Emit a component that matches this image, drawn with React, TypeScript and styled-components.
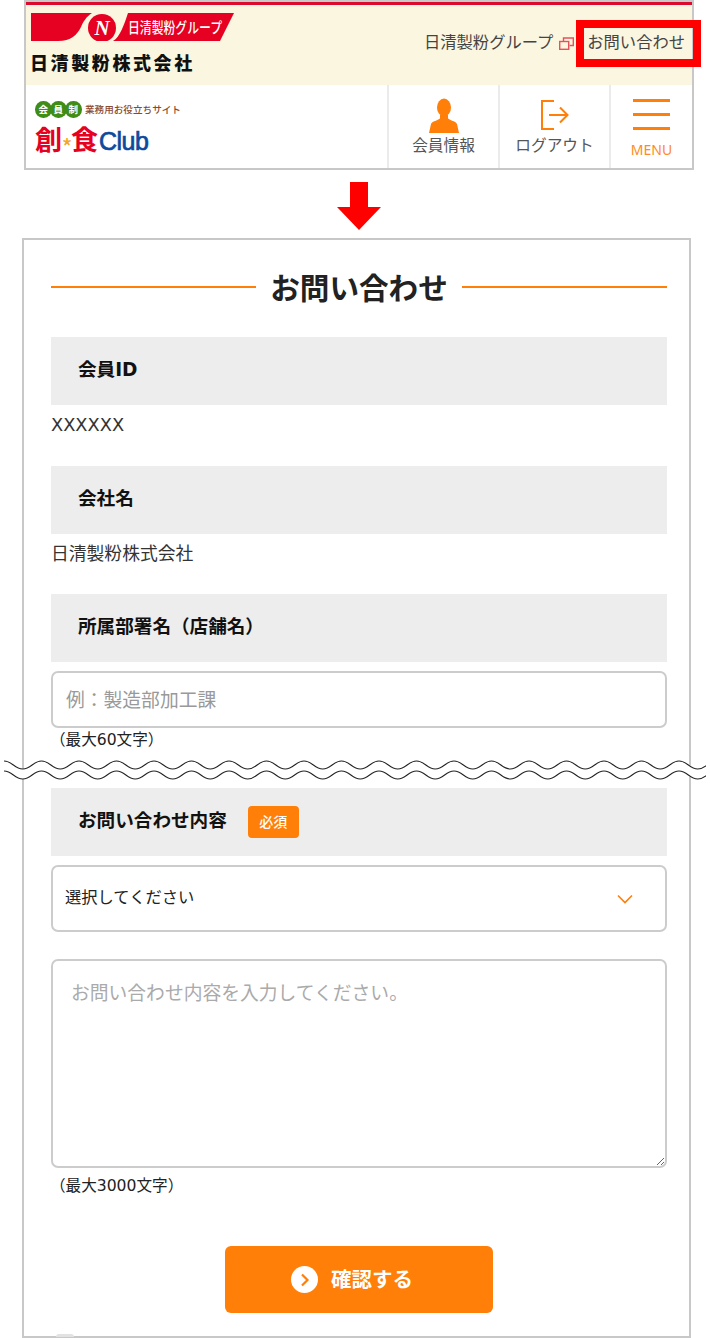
import React from "react";
import styled, { createGlobalStyle } from "styled-components";

const FONT = `"Noto Sans CJK JP", "Noto Sans", sans-serif`;
const BODY_FONT = `"DejaVu Sans", "Noto Sans CJK JP", sans-serif`;

const GlobalStyle = createGlobalStyle`
  html, body {
    margin: 0;
    padding: 0;
    background: #fff;
    font-family: ${FONT};
    color: #222;
  }
  *, *::before, *::after {
    box-sizing: border-box;
  }
`;

// sine-like line for the "page cut" mark
const wavePath = (y: number) => {
  const half = 18.75;
  let d = `M4 ${y}`;
  let x = 4;
  let down = true;
  while (x < 700) {
    const from = down ? y : y + 8;
    const to = down ? y + 8 : y;
    d += ` C${x + half * 0.45} ${from} ${x + half * 0.55} ${to} ${x + half} ${to}`;
    x += half;
    down = !down;
  }
  return d;
};

const App = () => {
  return (
    <Page>
      <GlobalStyle />
      <Header>
        <TopBar>
          <Brand>
            <svg width="204" height="28" viewBox="0 0 204 28" aria-hidden="true">
              <path d="M0 0H61C55 4 52 9 50 14C46 22 40 28 27 28H0Z" fill="#e60021" />
              <path d="M97 0H203L189 28H82C89 24 93 12 97 0Z" fill="#e60021" />
              <circle cx="71" cy="15" r="14" fill="#e60021" />
              <text x="71" y="22" textAnchor="middle" fontSize="21" fontWeight="700" fontStyle="italic" fill="#fff" fontFamily="Liberation Serif">N</text>
              <text x="97" y="20" fontSize="15" fontWeight="500" fill="#fff" fontFamily={FONT} textLength="94" lengthAdjust="spacingAndGlyphs">日清製粉グループ</text>
            </svg>
            <CompanyName>日清製粉株式会社</CompanyName>
          </Brand>
          <TopLinks>
            <TopLink>日清製粉グループ</TopLink>
            <svg width="15" height="13" viewBox="0 0 15 13" aria-hidden="true">
              <rect x="0.7" y="4.5" width="9" height="7.8" fill="none" stroke="#e8505b" strokeWidth="1.4" />
              <path d="M4.5 4V1H14.3V8.5H10.5" fill="none" stroke="#e8505b" strokeWidth="1.4" />
            </svg>
            <ContactLink>お問い合わせ</ContactLink>
          </TopLinks>
        </TopBar>
        <NavBar>
          <ClubLogo>
            <Tagline>
              <MemberBadge>
                <BadgeChar>会</BadgeChar>
                <BadgeChar>員</BadgeChar>
                <BadgeChar>制</BadgeChar>
              </MemberBadge>
              <TaglineText>業務用お役立ちサイト</TaglineText>
            </Tagline>
            <ClubName>
              <ClubKanji>創</ClubKanji>
              <ClubStar>*</ClubStar>
              <ClubKanji>食</ClubKanji>
              <ClubLatin>Club</ClubLatin>
            </ClubName>
          </ClubLogo>
          <NavItem>
            <IconSlot>
              <svg width="30" height="35" viewBox="0 0 30 35" aria-hidden="true">
                <ellipse cx="15" cy="9.5" rx="7" ry="9" fill="#ff7f09" />
                <path d="M11 17h8v3c0 2 8 3 9 6l2 9H0l2-9c1-3 9-4 9-6Z" fill="#ff7f09" />
              </svg>
            </IconSlot>
            <NavLabel>会員情報</NavLabel>
          </NavItem>
          <NavItem>
            <IconSlot>
              <svg width="28" height="30" viewBox="0 0 28 30" aria-hidden="true">
                <path d="M13 1H1V29H13" fill="none" stroke="#ff7f09" strokeWidth="2" />
                <path d="M8 15H26.5M19 7.5L26.5 15L19 22.5" fill="none" stroke="#ff7f09" strokeWidth="2" />
              </svg>
            </IconSlot>
            <NavLabel>ログアウト</NavLabel>
          </NavItem>
          <NavItem>
            <Burger>
              <BurgerLine />
              <BurgerLine />
              <BurgerLine />
            </Burger>
            <MenuLabel>MENU</MenuLabel>
          </NavItem>
        </NavBar>
      </Header>

      <ArrowRow>
        <svg width="44" height="48" viewBox="0 0 44 48" aria-hidden="true">
          <path d="M13 0H31V25H44L22 48L0 25H13Z" fill="#f00" />
        </svg>
      </ArrowRow>

      <Card>
        <TitleRow>
          <TitleRule />
          <Title>お問い合わせ</Title>
          <TitleRule />
        </TitleRow>

        <FieldHead>会員ID</FieldHead>
        <Value>XXXXXX</Value>

        <FieldHead>会社名</FieldHead>
        <Value>日清製粉株式会社</Value>

        <FieldHead>所属部署名（店舗名）</FieldHead>
        <TextInput placeholder="例：製造部加工課" readOnly />
        <Note>（最大60文字）</Note>

        <BreakSpace>
          <WaveBreak width="706" height="26" viewBox="0 0 706 26" aria-hidden="true">
            <path d={wavePath(8)} fill="none" stroke="#fff" strokeWidth="10" />
            <path d={wavePath(3)} fill="none" stroke="#222" strokeWidth="1.1" />
            <path d={wavePath(13)} fill="none" stroke="#222" strokeWidth="1.1" />
          </WaveBreak>
        </BreakSpace>

        <FieldHead>
          お問い合わせ内容
          <Required>必須</Required>
        </FieldHead>
        <SelectBox>
          <span>選択してください</span>
          <svg width="16" height="10" viewBox="0 0 16 10" aria-hidden="true">
            <path d="M1 1.5L8 8.5L15 1.5" fill="none" stroke="#ff7f09" strokeWidth="1.6" />
          </svg>
        </SelectBox>
        <TextArea placeholder="お問い合わせ内容を入力してください。" readOnly />
        <Note>（最大3000文字）</Note>

        <SubmitRow>
          <SubmitButton type="button">
            <SubmitIcon>
              <svg width="10" height="14" viewBox="0 0 10 14" aria-hidden="true">
                <path d="M2 1.5L7.5 7L2 12.5" fill="none" stroke="#ff7f09" strokeWidth="2.2" />
              </svg>
            </SubmitIcon>
            <SubmitText>確認する</SubmitText>
          </SubmitButton>
        </SubmitRow>
        <CutOffDot />
      </Card>
    </Page>
  );
};

const Page = styled.div`
  width: 710px;
  height: 1338px;
  overflow: hidden;
  padding-left: 22px;
`;

const Header = styled.header`
  width: 670px;
  height: 170px;
  margin-left: 2px;
  border: 2px solid #c8c8c8;
  border-top: none;
  display: flex;
  flex-direction: column;
`;

const TopBar = styled.div`
  height: 85px;
  flex: none;
  background: #faf6df;
  border-top: 2px solid #c8c8c8;
  box-shadow: inset 0 3px 0 #dc0a2c;
  padding: 11px 0 0 5px;
  display: flex;
  justify-content: space-between;
`;

const Brand = styled.div`
  display: flex;
  flex-direction: column;
  gap: 10px;
`;

const CompanyName = styled.div`
  font-size: 18px;
  line-height: 22px;
  font-weight: 900;
  color: #111;
  letter-spacing: 2.6px;
  margin-left: -1px;
`;

const TopLinks = styled.div`
  position: relative;
  display: flex;
  align-items: center;
  height: 52px;
  padding: 0 7px 0 0;
  margin-top: 2px;
  color: #444;
  font-size: 16.3px;
  & > svg {
    margin: 4px 0 0 6px;
  }
`;

const TopLink = styled.span`
  letter-spacing: 0;
`;

const ContactLink = styled.span`
  margin-left: 13px;
  color: #444;
  &::after {
    content: "";
    position: absolute;
    right: -9px;
    top: 5px;
    width: 125px;
    height: 47px;
    border: 8px solid #f00;
  }
`;

const NavBar = styled.nav`
  flex: 1;
  display: flex;
`;

const ClubLogo = styled.div`
  width: 361px;
  padding: 16px 0 0 9px;
`;

const Tagline = styled.div`
  display: flex;
  align-items: center;
  gap: 4px;
`;

const MemberBadge = styled.span`
  display: flex;
`;

const BadgeChar = styled.span`
  width: 16.5px;
  height: 16.5px;
  margin-right: -1.5px;
  border-radius: 50%;
  background: #3f8c16;
  color: #fff;
  font-size: 9.5px;
  line-height: 16px;
  text-align: center;
  font-weight: 700;
`;

const TaglineText = styled.span`
  margin-left: 1px;
  font-size: 9.6px;
  line-height: 16px;
  font-weight: 500;
  color: #8a4a30;
`;

const ClubName = styled.div`
  display: flex;
  align-items: baseline;
  height: 30px;
  margin-top: 6px;
  line-height: 30px;
`;

const ClubKanji = styled.span`
  font-size: 27px;
  font-weight: 700;
  color: #e60021;
`;

const ClubStar = styled.span`
  width: 9px;
  font-size: 21px;
  line-height: 20px;
  font-weight: 500;
  color: #f5a623;
  text-align: center;
  transform: translateY(5px);
`;

const ClubLatin = styled.span`
  margin-left: 1px;
  font-family: "Liberation Sans", sans-serif;
  font-size: 25px;
  letter-spacing: -0.5px;
  color: #0d4a9e;
  -webkit-text-stroke: 0.7px #0d4a9e;
`;

const NavItem = styled.div`
  width: 111px;
  flex: none;
  border-left: 2px solid #ebebeb;
  display: flex;
  flex-direction: column;
  align-items: center;
  padding-top: 12px;
  &:last-child {
    width: 83px;
  }
`;

const IconSlot = styled.div`
  height: 36px;
  display: flex;
  align-items: center;
  justify-content: center;
`;

const NavLabel = styled.span`
  font-size: 15.7px;
  line-height: 24px;
  color: #555;
`;

const Burger = styled.div`
  margin-top: 2px;
  display: flex;
  flex-direction: column;
  gap: 11px;
`;

const BurgerLine = styled.div`
  width: 37px;
  height: 3px;
  background: #ff7f09;
`;

const MenuLabel = styled.span`
  margin-top: 11px;
  font-family: "Noto Sans", sans-serif;
  font-size: 14px;
  line-height: 18px;
  color: #ff8a25;
`;

const ArrowRow = styled.div`
  height: 68px;
  padding: 12px 0 0 315px;
  & > svg {
    display: block;
  }
`;

const Card = styled.main`
  position: relative;
  width: 669px;
  height: 1100px;
  border: 2px solid #c8c8c8;
  padding: 27px 22px 0 27px;
`;

const TitleRow = styled.div`
  height: 40px;
  margin-bottom: 30px;
  display: flex;
  align-items: center;
  gap: 14px;
`;

const TitleRule = styled.div`
  flex: 1;
  height: 2px;
  background: #ff7f09;
`;

const Title = styled.h1`
  margin: 0;
  font-size: 29.6px;
  line-height: 40px;
  font-weight: 700;
  color: #222;
`;

const FieldHead = styled.h2`
  margin: 0;
  height: 68px;
  padding: 0 0 7px 27px;
  display: flex;
  align-items: center;
  background: #ededed;
  font-family: ${BODY_FONT};
  font-size: 18.6px;
  font-weight: 700;
  color: #111;
`;

const Value = styled.p`
  margin: 0;
  height: 60.5px;
  padding-top: 6px;
  font-family: ${BODY_FONT};
  font-size: 17.8px;
  line-height: 28px;
  color: #333;
`;

const TextInput = styled.input`
  display: block;
  width: 100%;
  height: 57px;
  margin-top: 9px;
  padding: 0 13px 3px;
  border: 2px solid #ccc;
  border-radius: 7px;
  outline: none;
  font-family: ${FONT};
  font-size: 18.8px;
  &::placeholder {
    color: #999;
  }
`;

const Note = styled.p`
  margin: 0 0 0 -1px;
  height: 22px;
  font-family: ${BODY_FONT};
  font-size: 15.6px;
  line-height: 24px;
  color: #222;
`;

const BreakSpace = styled.div`
  position: relative;
  height: 38px;
`;

const WaveBreak = styled.svg`
  position: absolute;
  left: -51px;
  top: 8px;
`;

const Required = styled.span`
  margin: 7px 0 0 21px;
  width: 51px;
  height: 32px;
  border-radius: 4px;
  background: #ff7f09;
  color: #fff;
  font-family: ${FONT};
  font-size: 14px;
  font-weight: 500;
  line-height: 31px;
  text-align: center;
`;

const SelectBox = styled.div`
  height: 67px;
  margin: 9px 0 27px;
  padding: 0 32px 5px 12px;
  border: 2px solid #ccc;
  border-radius: 7px;
  display: flex;
  align-items: center;
  justify-content: space-between;
  font-size: 16.3px;
  color: #222;
  & > svg {
    margin-top: 6px;
  }
`;

const TextArea = styled.textarea`
  display: block;
  width: 100%;
  height: 209px;
  margin: 0 0 6px;
  padding: 17px 18px;
  border: 2px solid #ccc;
  border-radius: 7px;
  outline: none;
  font-family: ${FONT};
  font-size: 18.8px;
  line-height: 27px;
  &::placeholder {
    color: #aaa;
  }
`;

const SubmitRow = styled.div`
  padding: 50px 0 0 174px;
`;

const SubmitButton = styled.button`
  width: 268px;
  height: 67px;
  border: none;
  border-radius: 6px;
  background: #ff7f09;
  display: flex;
  align-items: center;
  justify-content: center;
  gap: 13px;
  padding: 0 14px 0 0;
  color: #fff;
  font-family: ${FONT};
  font-size: 20.5px;
  font-weight: 700;
`;

const SubmitIcon = styled.span`
  width: 27px;
  height: 27px;
  border-radius: 50%;
  background: #fff;
  display: flex;
  align-items: center;
  justify-content: center;
`;

const SubmitText = styled.span`
  margin-bottom: 4px;
`;

// top of the next row, cut off by the bottom edge of the capture
const CutOffDot = styled.div`
  position: absolute;
  left: 32px;
  bottom: -1px;
  width: 18px;
  height: 3px;
  border-radius: 9px 9px 0 0;
  background: #e2e2e2;
`;

export default App;
